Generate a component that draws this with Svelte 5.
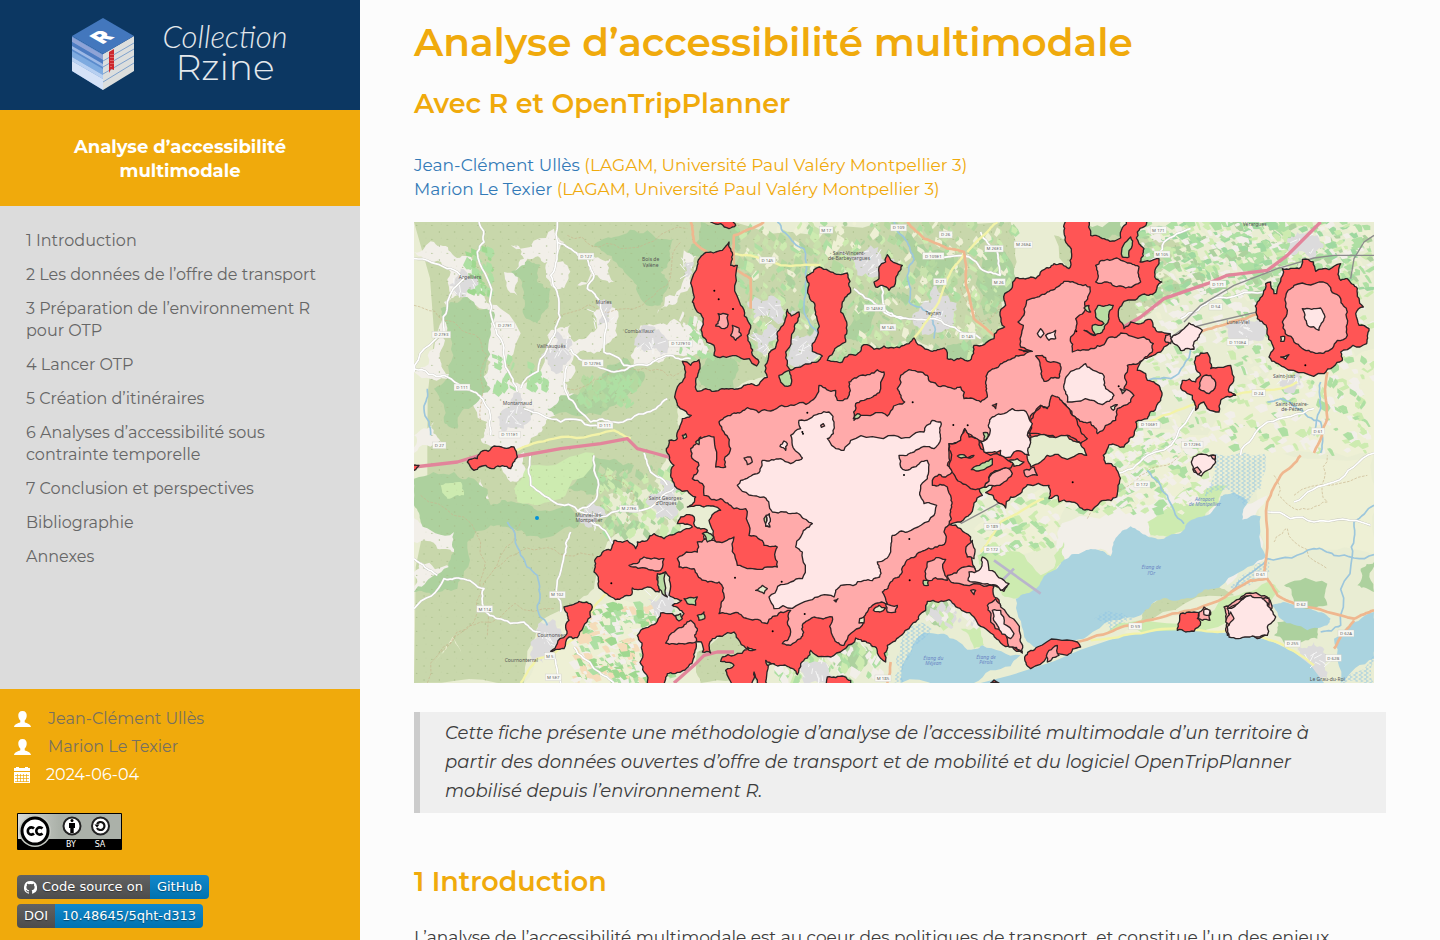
<script lang="ts">
	type Point = [number, number];

	const title = 'Analyse d’accessibilité multimodale';

	const chapters = [
		'1 Introduction',
		'2 Les données de l’offre de transport',
		'3 Préparation de l’environnement R pour OTP',
		'4 Lancer OTP',
		'5 Création d’itinéraires',
		'6 Analyses d’accessibilité sous contrainte temporelle',
		'7 Conclusion et perspectives',
		'Bibliographie',
		'Annexes'
	];

	const authors = ['Jean-Clément Ullès', 'Marion Le Texier'];
	const affiliation = '(LAGAM, Université Paul Valéry Montpellier 3)';

	// Small deterministic generator so the map stays the same on every load
	let seed = 7;
	function random() {
		seed = (seed * 16807) % 2147483647;
		return seed / 2147483647;
	}

	// Splits every edge into short steps and shifts them a little, for natural outlines
	function rough(points: string, amount: number, closed = true) {
		let line = points.split(' ').map((pair) => pair.split(',').map(Number));
		if (closed) line.push(line[0]);
		for (let pass = 0; pass < 3; pass++) {
			const next = [line[0]];
			for (let i = 1; i < line.length; i++) {
				const [ax, ay] = line[i - 1];
				const [bx, by] = line[i];
				const length = Math.hypot(bx - ax, by - ay);
				if (length > 10) {
					const shift = (random() - 0.5) * length * amount;
					next.push([(ax + bx) / 2 - ((by - ay) / length) * shift, (ay + by) / 2 + ((bx - ax) / length) * shift]);
				}
				next.push([bx, by]);
			}
			line = next;
		}
		return line.map(([x, y]) => `${Math.round(x)},${Math.round(y)}`).join(' ');
	}

	const roughAll = (shapes: string[], amount: number, closed = true) =>
		shapes.map((points) => rough(points, amount, closed));

	// Land cover, in map units (2880 x 1383)
	const scrub = roughAll([
		'0,0 960,0 1400,0 1790,0 1800,160 1760,230 1770,330 1690,370 1680,415 1600,410 1500,350 1240,440 1060,460 960,500 860,500 790,560 800,650 740,740 700,800 560,830 640,920 580,960 540,1100 500,1130 380,1200 330,1383 0,1383',
		'860,1383 850,1290 960,1230 1000,1280 1060,1383',
		'1920,40 2030,40 2180,30 2320,60 2240,150 2300,190 2180,300 2110,320 2000,300',
		'2200,1150 2260,1110 2400,1090 2460,1120 2180,1200'
	], 0.2);

	const forests = roughAll([
		'540,75 600,45 700,25 780,50 770,110 740,150 760,200 740,250 680,230 640,160 570,90',
		'290,150 340,115 380,130 370,180 410,200 400,260 370,305 330,280 330,210',
		'110,240 160,225 240,270 230,340 210,450 230,500 150,560 130,620 90,600 60,500 100,470 100,330 80,260',
		'0,770 120,750 180,770 230,850 300,840 360,860 450,850 560,880 480,920 380,950 300,920 230,910 160,960 130,1100 60,1120 0,1110 60,1060 120,990 120,930 20,900 0,850',
		'460,800 500,740 600,710 660,730 620,800 540,820',
		'400,560 440,520 540,500 580,430 640,410 690,450 640,520 560,580 420,580',
		'850,470 890,405 960,410 960,500 880,500',
		'820,90 860,0 960,0 980,60 900,90 860,110',
		'1500,60 1600,90 1640,140 1570,200 1530,160 1490,100',
		'1290,330 1330,220 1380,250 1370,320 1330,360',
		'1700,90 1760,60 1800,140 1760,240 1710,280',
		'1600,370 1670,350 1680,415 1600,410',
		'2010,0 2120,0 2130,40 2060,50 2020,40',
		'2590,1200 2640,1170 2720,1200 2710,1250 2640,1270 2580,1240',
		'1540,1140 1600,1130 1620,1190 1560,1210',
		'1250,1290 1330,1260 1380,1300 1340,1350 1260,1330',
		'2610,1090 2740,1085 2740,1150 2640,1140',
		'2840,1040 2880,1020 2880,1110 2830,1090'
	], 0.4);

	const openLand = roughAll([
		'0,90 60,60 110,90 170,100 200,170 260,260 290,480 340,480 400,340 430,320 470,310 480,360 540,330 580,240 610,340 560,390 480,400 450,480 480,560 400,590 370,640 240,690 200,650 220,600 190,500 230,420 240,270 140,210 90,240 100,320 80,420 110,460 0,450 60,380 100,240 110,150 40,120',
		'290,70 420,20 450,60 430,120 460,130 440,200 410,190 400,120 340,110 310,220 270,150 330,110',
		'490,190 530,100 590,110 600,180 550,160',
		'650,400 680,310 780,290 860,330 870,410 770,400 720,420 660,430',
		'730,275 800,200 810,80 850,100 830,180 790,240',
		'0,870 50,920 130,930 120,990 70,980 0,960',
		'190,790 200,770 225,830 180,870 155,850',
		'20,1020 110,1035 90,1060 0,1110 0,1050',
		'0,640 60,600 80,660 0,693',
		'230,700 330,690 330,760 290,780',
		'2380,890 2560,820 2560,1010 2440,1090 2420,1050',
		'1930,930 2110,820 2390,780 2400,860 2240,930 2100,1000 1990,1000 1920,1000'
	], 0.5);

	const farmland = roughAll([
		'120,1250 60,1330 70,1310 115,1245 145,1300',
		'1980,640 2380,640 2600,420 2880,380 2880,693 2560,700 2400,800 2060,920 1900,830',
		'2560,693 2880,693 2880,1000 2700,980 2560,1010',
		'1680,920 1770,860 1880,800 1960,850 1920,960 1820,1000 1740,990',
		'600,1130 780,1190 760,1383 330,1383 400,1230 520,1160',
		'2330,1260 2130,1230 2450,1190 2460,1220'
	], 0.2);

	const meadows = roughAll([
		'300,800 350,730 540,693 530,740 440,830 310,840',
		'80,790 140,780 150,820 100,830',
		'1690,1000 1760,970 1880,1060 1940,1000 1930,1030 1860,1110 1800,1130 1740,1090',
		'2200,900 2330,780 2440,790 2370,890 2260,945 2210,940',
		'2150,1200 2420,1130 2560,1080 2600,1110 2540,1170 2440,1200 2200,1235 2080,1230',
		'1920,1000 1950,960 1950,1020 1920,1045',
		'1640,1220 1700,1215 1710,1270 1680,1280'
	], 0.3);

	const towns = [
		'105,190 140,140 190,170 180,200 130,220',
		'380,400 420,330 470,350 460,420 420,450',
		'260,570 310,510 360,560 330,620 270,630',
		'550,250 585,240 585,300 550,310',
		'660,370 700,310 750,340 740,400 690,390',
		'1110,420 1150,340 1220,320 1225,400 1170,440',
		'1010,340 1060,310 1090,350 1050,400 1020,390',
		'1000,240 1090,230 1150,270 1110,300 1020,290',
		'1270,90 1370,70 1440,110 1420,150 1330,160',
		'1520,250 1560,190 1600,220 1620,280 1560,330 1500,310',
		'700,830 740,770 800,800 790,880 730,890',
		'490,880 520,850 580,880 540,915',
		'700,1130 760,1110 780,1160 720,1180',
		'350,1260 380,1200 440,1220 400,1300 360,1320',
		'2620,60 2650,30 2710,40 2700,110 2640,100',
		'2430,310 2500,290 2560,330 2470,350',
		'2600,470 2650,450 2660,490 2610,510',
		'2650,1280 2700,1260 2740,1300 2740,1370 2700,1350',
		'1150,1330 1210,1320 1260,1383 1170,1383',
		'810,130 840,120 840,160 815,165'
	];
	const townShapes = roughAll(towns, 0.7);

	const water = roughAll([
		'1805,1130 1850,1110 1880,1080 1920,1045 1950,1013 2000,993 2050,983 2090,1003 2105,948 2150,913 2200,943 2250,950 2300,933 2320,903 2380,880 2420,823 2460,812 2500,833 2485,893 2540,883 2555,1003 2530,1018 2420,1093 2370,1103 2320,1128 2250,1128 2210,1153 2180,1180 2020,1243 1920,1258 1860,1275 1830,1240',
		'1460,1383 1480,1300 1520,1238 1590,1235 1660,1283 1705,1270 1820,1300 1790,1333 1680,1383',
		'2570,1150 2610,1140 2690,1160 2750,1190 2740,1210 2680,1225 2600,1190',
		'2780,1383 2760,1250 2790,1230 2880,1170 2880,1310'
	], 0.25);
	const sea = '1700,1383 1790,1360 1920,1318 2000,1283 2120,1243 2220,1228 2330,1224 2430,1233 2500,1240 2570,1256 2640,1290 2690,1330 2730,1383';

	const marshes = roughAll([
		'2370,830 2400,693 2550,693 2540,800 2490,850 2440,800',
		'1450,1300 1470,1240 1520,1200 1560,1220 1500,1270 1470,1383 1440,1383',
		'2780,1383 2880,1300 2880,1383',
		'2450,1090 2560,1010 2560,1060 2450,1110',
		'2040,1190 2100,1170 2160,1190 2090,1225'
	], 0.3);

	const streams = roughAll([
		'1090,0 1130,50 1170,80 1175,200 1170,260 1220,340',
		'1440,0 1480,60 1500,110 1480,160 1485,240 1550,280 1560,350',
		'280,900 320,1000 370,1060 370,1150 400,1210',
		'2560,540 2600,530 2650,560 2720,600 2720,693',
		'2720,480 2720,560 2700,640',
		'2880,850 2820,900 2815,1000 2780,1210 2720,1230',
		'2200,745 2260,820 2310,905',
		'2190,480 2270,470 2330,380 2360,330',
		'2450,1110 2560,1010 2700,980 2760,1000 2880,998',
		'40,500 30,560 50,640'
	], 0.25, false);

	const motorways = [
		'2720,0 2660,60 2620,100 2560,145 2440,160 2380,185 2250,230 2180,285 2120,320',
		'0,735 130,720 230,690 300,705 440,680 560,665 640,650 670,680 720,693 780,710',
		'960,1290 910,1290 870,1300 840,1330 780,1383'
	];

	const trunks = roughAll([
		'960,130 960,40 1050,0',
		'960,140 1010,170 1010,260',
		'1480,0 1530,50 1600,80 1650,90 1655,180 1680,290 1750,350',
		'830,0 840,60 880,90',
		'2360,330 2450,300 2540,275',
		'1990,1260 2110,1220 2200,1195 2350,1160 2510,1075 2560,1070 2590,1120 2660,1150 2820,1190 2880,1165',
		'2550,1060 2560,840 2600,760 2660,700',
		'2700,693 2740,590 2740,450',
		'2760,1280 2790,1230 2820,1195',
		'1430,1320 1420,1383'
	], 0.1, false);

	const secondary = roughAll([
		'300,690 420,650 600,625 650,650',
		'960,95 1010,100 1100,130 1220,130',
		'1660,90 1720,30 1750,0',
		'1650,95 1600,170 1550,280 1500,350',
		'320,1383 370,1310 420,1295 480,1250 490,1210 570,1120 600,1090',
		'1980,680 2060,640 2160,610 2330,550 2450,520 2600,500 2650,480',
		'1700,990 1760,900 1890,830',
		'2030,1255 2160,1235 2330,1220 2460,1225 2600,1265 2700,1330'
	], 0.1, false);

	const roads = roughAll([
		'195,0 210,60 190,90 230,220 260,350 290,460 310,510',
		'0,110 100,140 150,170 100,240 90,330 0,450',
		'430,0 430,60 470,80 520,110 540,160 520,200 560,240 570,390 630,430 700,430 770,400 830,410',
		'430,60 410,160 435,240 425,330 400,380 320,500',
		'470,380 520,420 600,450 660,430',
		'460,430 465,530 530,600 600,600 700,570 760,530',
		'0,440 90,460 180,510 210,540 230,640',
		'330,560 440,600 560,615',
		'0,1160 90,1070 140,1070 210,1100 210,1160 250,1190 330,1200 380,1230',
		'350,693 350,790 420,840 500,870 560,885 700,860 780,800',
		'540,700 550,820 490,870',
		'470,930 450,1000 430,1120 440,1170',
		'530,900 600,970',
		'690,693 710,750 760,790',
		'1320,200 1390,250 1460,290 1560,290 1640,330 1700,350',
		'1400,190 1420,270 1470,290',
		'1530,100 1650,100 1700,140 1760,160',
		'1700,30 1750,90 1760,160',
		'2200,130 2250,60 2330,20',
		'2300,290 2400,230 2550,210',
		'2480,700 2560,600 2700,560',
		'2640,840 2760,780 2880,693',
		'0,1010 70,1060',
		'2100,760 2200,700 2340,560',
		'2560,870 2700,900 2870,910',
		'480,1275 540,1340 600,1383',
		'420,1295 440,1383'
	], 0.25, false);

	const paths = roughAll([
		'0,250 120,300 220,400 200,600',
		'460,40 620,80 820,20',
		'420,300 640,260 740,200 800,60',
		'460,500 620,440 760,460 820,430',
		'20,820 200,960 180,1200 40,1383',
		'240,1040 380,980 540,1000',
		'220,1240 260,1000 320,900',
		'80,1290 200,1200 420,1160',
		'560,760 660,820 640,900',
		'1640,200 1700,300 1760,240',
		'2580,760 2640,860 2740,840 2740,700',
		'2580,960 2620,920 2740,1040',
		'2640,820 2860,760',
		'2020,890 2180,760 2300,700'
	], 0.35, false);

	const railways = [
		'2140,450 2165,410 2240,370 2300,325 2400,300 2550,265',
		'2310,300 2360,250 2460,190 2590,140 2700,108 2760,100 2880,100',
		'1640,905 1780,830',
		'2810,170 2820,110 2850,60 2880,40'
	];

	// Isochrones, from the widest time band to the narrowest
	const far = roughAll([
		'805,418 830,430 855,413 858,440 845,480 850,508 875,500 900,508 950,500 990,490 1035,488 1060,466 1064,395 1092,355 1090,330 1112,300 1120,262 1132,282 1155,270 1142,320 1115,390 1120,425 1130,445 1160,435 1190,425 1225,402 1195,388 1195,365 1210,295 1202,245 1182,200 1180,160 1200,143 1222,137 1250,150 1300,153 1310,205 1285,240 1280,270 1298,335 1295,360 1262,380 1240,415 1285,420 1305,398 1325,400 1350,368 1380,382 1410,372 1440,378 1470,370 1485,365 1500,348 1520,370 1550,387 1590,378 1600,410 1640,408 1668,415 1680,370 1740,350 1750,325 1772,315 1758,280 1772,215 1805,168 1850,165 1865,170 1885,145 1920,125 1965,140 1972,90 1950,30 1960,-10 2020,-10 2030,40 2070,50 2120,48 2140,-10 2200,-10 2170,30 2175,65 2190,80 2178,120 2235,110 2222,165 2243,180 2225,210 2180,220 2130,238 2115,290 2130,320 2150,300 2210,292 2235,330 2268,335 2265,365 2240,390 2205,405 2180,420 2170,445 2195,455 2200,475 2225,485 2242,525 2225,560 2200,590 2165,600 2160,640 2130,675 2085,668 2068,700 2075,725 2105,735 2112,790 2108,825 2070,835 2035,865 1995,853 1965,838 1935,840 1930,820 1905,830 1905,790 1840,788 1810,820 1790,825 1775,858 1750,840 1715,812 1740,785 1690,795 1705,820 1680,843 1670,875 1640,900 1607,908 1640,920 1670,945 1678,980 1675,1020 1700,1080 1740,1093 1760,1150 1760,1200 1825,1293 1760,1263 1730,1233 1700,1213 1650,1168 1605,1133 1540,1138 1535,1165 1505,1200 1465,1238 1420,1270 1415,1320 1390,1293 1365,1263 1325,1248 1260,1300 1190,1285 1160,1325 1150,1358 1120,1333 1065,1320 1060,1400 1030,1383 1020,1350 1010,1400 960,1400 945,1370 935,1345 960,1330 920,1318 925,1305 960,1300 1005,1280 960,1230 925,1243 895,1250 890,1293 865,1290 862,1260 845,1260 838,1310 800,1350 760,1355 755,1400 700,1400 690,1350 685,1290 670,1240 680,1225 725,1205 740,1173 790,1190 810,1175 775,1150 803,1135 765,1120 755,1050 730,1060 735,1110 700,1095 655,1098 650,1120 605,1133 555,1098 540,1050 545,1010 590,985 600,955 640,955 665,980 670,960 720,935 750,950 800,930 835,915 790,905 800,885 835,880 842,912 880,925 870,950 905,960 885,895 920,865 870,855 820,855 845,825 790,800 770,760 780,730 757,680 765,655 790,650 805,590 832,580 790,550 785,510 805,480 815,450',
		'890,0 910,-10 955,-10 965,10 945,20 920,5',
		'945,60 925,85 870,95 850,130 835,240 860,275 865,340 900,370 900,400 975,405 1028,432 1035,420 1010,370 1010,310 980,250 970,130 950,130 950,80',
		'1380,180 1395,170 1395,135 1415,120 1420,98 1430,115 1465,130 1445,175 1425,205 1405,190 1385,195',
		'2530,290 2530,240 2555,185 2570,180 2580,215 2588,215 2605,140 2655,140 2665,112 2698,120 2705,148 2780,125 2780,175 2800,170 2830,200 2848,255 2825,275 2835,310 2865,320 2858,365 2780,390 2785,415 2730,455 2610,435 2565,405 2580,380 2560,320',
		'2345,405 2380,392 2390,440 2450,430 2460,465 2445,510 2465,520 2420,535 2415,570 2380,560 2370,540 2345,565 2335,520 2305,505 2305,475 2345,480 2360,460',
		'160,720 190,710 200,690 240,672 300,675 310,705 290,740 240,740 215,730 180,745',
		'-10,735 15,730 0,745',
		'410,1288 430,1265 455,1240 465,1195 450,1155 495,1138 535,1155 530,1185 490,1247 465,1245 450,1280',
		'1835,1300 1870,1275 1990,1260 2000,1275 1960,1300 1850,1340',
		'2290,1225 2300,1175 2325,1170 2355,1172 2360,1200 2340,1228',
		'1240,1365 1290,1363 1310,1375 1300,1400 1230,1400',
		'1730,1383 1740,1374 1755,1383'
	], 0.35);

	const middle = roughAll([
		'960,573 1000,557 1070,567 1140,550 1205,525 1215,490 1265,505 1270,535 1300,530 1305,480 1340,460 1390,443 1410,450 1400,500 1365,530 1325,545 1320,595 1350,580 1420,582 1472,540 1450,500 1460,460 1485,443 1520,450 1550,480 1600,495 1640,495 1650,530 1700,540 1720,525 1715,485 1730,445 1770,420 1820,400 1855,388 1820,375 1828,310 1812,300 1832,270 1838,235 1870,225 1910,205 1950,178 2000,188 2028,195 2012,240 2010,270 1985,290 1970,345 1975,390 2040,380 2080,350 2120,333 2190,345 2218,365 2215,390 2185,415 2140,430 2138,480 2130,500 2160,520 2150,540 2110,560 2105,595 2050,635 2030,600 1990,590 1965,560 1940,540 1915,520 1905,560 1880,550 1855,575 1850,640 1780,690 1730,660 1695,655 1652,620 1640,655 1605,665 1605,700 1600,730 1620,745 1595,765 1575,757 1555,775 1555,790 1600,795 1612,830 1610,870 1605,908 1590,930 1595,960 1570,975 1520,990 1475,1020 1465,1050 1430,1080 1405,1110 1420,1145 1375,1150 1360,1170 1345,1210 1290,1270 1255,1240 1255,1185 1200,1185 1165,1210 1160,1250 1130,1270 1105,1265 1130,1230 1120,1200 1130,1165 1100,1170 1060,1205 1000,1190 960,1173 915,1175 930,1120 915,1080 870,1075 840,1040 795,1035 790,1010 850,990 850,960 900,955 960,945 970,1030 1000,1040 1060,1035 1090,1035 1090,975 1050,970 1005,940 995,860 960,860 920,830 870,820 865,785 835,770 855,730 830,680 870,645 900,645 905,735 935,735 950,680 930,630 915,600',
		'645,1030 690,1005 750,1010 740,1045 700,1040',
		'755,1263 790,1220 830,1195 850,1220 845,1260 800,1265',
		'912,275 942,278 940,315 905,312',
		'955,310 975,318 982,340 965,355 950,340',
		'2045,180 2045,130 2080,112 2135,120 2175,135 2180,180 2120,192 2080,180',
		'2615,225 2640,190 2740,185 2780,230 2800,270 2800,340 2770,355 2730,393 2690,390 2640,360 2605,300 2620,265',
		'2355,500 2365,465 2390,460 2405,490 2385,515',
		'2255,340 2268,335 2270,365 2255,360',
		'1540,1020 1595,1012 1600,1075 1590,1073 1540,1075',
		'1600,1060 1650,1035 1680,1035 1685,1070 1740,1080 1780,1090 1770,1108 1740,1090 1620,1083',
		'1720,1150 1745,1130 1760,1155 1820,1240 1825,1290 1785,1275 1730,1200',
		'1710,795 1730,760 1780,735 1795,755 1770,780',
		'2350,1190 2370,1155 2390,1170 2388,1195 2365,1195',
		'2430,1155 2490,1120 2560,1125 2570,1170 2560,1240 2530,1250 2440,1240 2440,1200',
		'1905,1285 1930,1270 1935,1300 1900,1320',
		'1655,985 1675,955 1680,1010 1660,1005',
		'1415,1145 1450,1150 1445,1170 1420,1170',
		'1670,1105 1685,1105 1680,1118',
		'1830,745 1860,735 1870,760 1840,765'
	], 0.35);

	// Pockets of the widest band inside the middle one
	const farPockets = roughAll([
		'1605,665 1640,655 1652,620 1665,645 1695,655 1700,680 1730,700 1800,720 1790,738 1730,755 1710,795 1670,800 1640,780 1605,730',
		'1865,402 1885,400 1900,418 1938,425 1935,468 1890,478 1878,430',
		'1846,635 1850,600 1880,550 1900,560 1915,520 1950,545 1990,600 2020,650 2000,665 1960,640 1900,640',
		'1735,550 1748,545 1745,560',
		'1815,383 1850,386 1830,389',
		'1260,1135 1272,1130 1266,1140'
	], 0.3);

	const gaps = roughAll([
		'2010,325 2045,340 2035,310 2070,305 2045,285 2052,250 2098,250 2085,290 2065,330 2040,341',
		'2125,105 2128,70 2150,45 2155,70 2145,105',
		'1095,460 1125,445 1130,490 1112,492 1100,480',
		'810,1130 850,1125 845,1150 820,1145',
		'850,1180 870,1170 872,1190 855,1195',
		'730,1055 755,1050 760,1125 735,1100',
		'865,935 880,930 900,945 880,960',
		'1528,1075 1543,1075 1543,1090 1530,1090',
		'1318,590 1330,575 1340,580 1330,590',
		'805,640 815,635 818,645 808,650',
		'845,660 860,645 855,668',
		'1708,632 1720,632 1722,645 1710,655',
		'1050,890 1060,880 1065,915 1055,912',
		'1055,1315 1080,1325 1060,1330',
		'1000,1275 1025,1283 1005,1285',
		'1672,743 1712,722 1735,710 1735,728 1700,745',
		'1630,702 1680,700 1670,708',
		'785,1180 800,1175 805,1190 795,1197',
		'2010,258 2025,250 2030,270'
	], 0.3);

	const paleGaps = roughAll([
		'1378,1165 1395,1150 1415,1158 1398,1170',
		'1337,1190 1350,1185 1350,1203 1335,1203',
		'2600,345 2612,343 2610,358 2600,358',
		'2600,405 2625,398 2615,412',
		'2090,555 2110,548 2098,565',
		'2118,500 2135,505 2125,515',
		'1850,645 1890,637 1960,640 2000,665 2018,700 1960,712 1900,700 1880,720 1850,735 1840,710',
		'1785,715 1810,710 1830,720 1800,733',
		'1025,1105 1045,1090 1060,1100 1050,1115'
	], 0.3);

	const near = roughAll([
		'1215,575 1245,570 1260,600 1258,635 1240,650 1260,675 1290,685 1310,655 1440,640 1530,630 1555,595 1580,600 1580,650 1560,680 1530,673 1500,690 1455,700 1460,735 1475,745 1500,735 1540,715 1540,770 1520,800 1530,845 1568,850 1560,880 1480,930 1435,940 1430,990 1390,1020 1397,1065 1350,1075 1280,1090 1260,1125 1185,1135 1080,1160 1065,1125 1130,1080 1165,1070 1165,990 1145,975 1160,945 1195,905 1160,880 1110,870 1075,870 1050,825 970,790 980,775 1030,755 1045,715 1100,710 1130,725 1165,708 1135,670 1130,640 1160,620 1155,595',
		'1725,605 1735,585 1760,577 1795,560 1830,565 1845,590 1855,605 1840,640 1850,660 1845,700 1800,690 1790,705 1760,700 1760,685 1710,690 1700,660 1722,645',
		'1950,500 1965,455 1995,440 2015,425 2030,440 2065,455 2075,500 2100,520 2065,548 1960,540',
		'2665,260 2720,258 2733,285 2715,325 2680,310',
		'2270,350 2310,320 2325,303 2350,315 2365,325 2355,345 2340,360 2340,382 2300,385 2290,370',
		'1870,335 1880,320 1890,335 1880,347',
		'1895,340 1925,325 1925,350 1905,355',
		'1662,1075 1665,1050 1695,1045 1705,1005 1715,1010 1725,1045 1785,1085 1760,1105 1720,1085',
		'1735,1165 1760,1165 1800,1235 1790,1250 1750,1210',
		'2440,1160 2480,1135 2510,1120 2560,1130 2560,1150 2585,1185 2560,1215 2560,1240 2500,1245 2445,1245 2440,1215 2455,1185',
		'2332,720 2338,705 2370,697 2398,700 2405,720 2390,740 2362,762 2340,750',
		'2370,1162 2388,1165 2385,1180 2370,1178',
		'1098,673 1110,657 1120,665 1115,685',
		'1056,880 1066,875 1064,905 1068,915 1055,912'
	], 0.3);

	const nearSpots = roughAll([
		'2338,742 2350,735 2362,750 2352,758',
		'2390,700 2404,700 2404,712 2396,710',
		'2435,1200 2450,1170 2460,1190 2445,1210',
		'2545,1130 2565,1128 2565,1150',
		'1220,610 1228,605 1232,612 1222,616',
		'990,708 1010,705 1015,720 1000,728',
		'2445,1150 2485,1128 2500,1122 2460,1150 2440,1160'
	], 0.2);

	const dots: Point[] = [
		[901, 206], [914, 232], [957, 261], [592, 1084], [1180, 572], [1496, 541], [1618, 609],
		[1661, 610], [1487, 1075], [1987, 328], [2674, 430], [2114, 493], [1470, 759], [1486, 951],
		[1103, 1079], [1076, 1228], [1167, 635], [1976, 781], [1172, 1176], [963, 1067], [1165, 630]
	];

	const places = [
		{ x: 168, y: 170, name: 'Argelliers' },
		{ x: 412, y: 379, name: 'Vailhauquès' },
		{ x: 310, y: 549, name: 'Montarnaud' },
		{ x: 569, y: 245, name: 'Murles' },
		{ x: 675, y: 334, name: 'Combaillaux' },
		{ x: 710, y: 118, name: 'Bois de' },
		{ x: 710, y: 134, name: 'Valène' },
		{ x: 1305, y: 98, name: 'Saint-Vincent-' },
		{ x: 1305, y: 113, name: 'de-Barbeyrargues' },
		{ x: 1558, y: 280, name: 'Teyran' },
		{ x: 2522, y: 12, name: 'Vérargues' },
		{ x: 2472, y: 306, name: 'Lunel-Viel' },
		{ x: 2610, y: 468, name: 'Saint-Just' },
		{ x: 2634, y: 553, name: 'Saint-Nazaire-' },
		{ x: 2634, y: 568, name: 'de-Pézan' },
		{ x: 525, y: 884, name: 'Murviel-lès-' },
		{ x: 525, y: 899, name: 'Montpellier' },
		{ x: 756, y: 833, name: 'Saint Georges-' },
		{ x: 756, y: 848, name: 'd’Orques' },
		{ x: 412, y: 1246, name: 'Cournonsec' },
		{ x: 322, y: 1320, name: 'Cournonterral' },
		{ x: 2740, y: 1378, name: 'Le Grau-du-Roi' }
	];

	const waterNames = [
		{ x: 2212, y: 1042, name: 'Étang de' },
		{ x: 2212, y: 1058, name: 'l’Or' },
		{ x: 1558, y: 1314, name: 'Étang du' },
		{ x: 1558, y: 1328, name: 'Méjean' },
		{ x: 1716, y: 1312, name: 'Étang de' },
		{ x: 1716, y: 1326, name: 'Pérols' },
		{ x: 2372, y: 838, name: 'Aéroport' },
		{ x: 2372, y: 853, name: 'de Montpellier' }
	];

	const shields = [
		{ x: 516, y: 103, ref: 'D 127' }, { x: 82, y: 338, ref: 'D 27E3' }, { x: 273, y: 310, ref: 'D 27E1' },
		{ x: 144, y: 496, ref: 'D 111' }, { x: 536, y: 423, ref: 'D 127E6' }, { x: 573, y: 610, ref: 'D 111' },
		{ x: 287, y: 638, ref: 'D 111E1' }, { x: 76, y: 670, ref: 'D 27' }, { x: 800, y: 365, ref: 'D 127E10' },
		{ x: 1237, y: 24, ref: 'M 17' }, { x: 1454, y: 17, ref: 'D 109' }, { x: 1595, y: 38, ref: 'D 26' },
		{ x: 1558, y: 102, ref: 'D 109E1' }, { x: 1740, y: 80, ref: 'M 26E3' }, { x: 1828, y: 68, ref: 'M 26E4' },
		{ x: 1060, y: 115, ref: 'D 145' }, { x: 1382, y: 258, ref: 'D 145E2' }, { x: 1422, y: 316, ref: 'M 145' },
		{ x: 1578, y: 179, ref: 'D 21' }, { x: 1754, y: 180, ref: 'M 26' }, { x: 1660, y: 342, ref: 'D 145' },
		{ x: 2233, y: 24, ref: 'M 171' }, { x: 2244, y: 97, ref: 'M 105' }, { x: 2412, y: 186, ref: 'D 171' },
		{ x: 2405, y: 254, ref: 'D 54' }, { x: 2471, y: 360, ref: 'D 110E4' }, { x: 2534, y: 513, ref: 'D 24' },
		{ x: 2206, y: 608, ref: 'D 106E1' }, { x: 2335, y: 668, ref: 'D 172E6' }, { x: 2184, y: 787, ref: 'D 172' },
		{ x: 645, y: 860, ref: 'M 27E6' }, { x: 430, y: 1118, ref: 'M 102' }, { x: 212, y: 1161, ref: 'M 114' },
		{ x: 407, y: 1302, ref: 'M 5' }, { x: 418, y: 1366, ref: 'M 5E7' }, { x: 1734, y: 914, ref: 'D 189' },
		{ x: 1734, y: 983, ref: 'D 172' }, { x: 2540, y: 1058, ref: 'D 61' }, { x: 2712, y: 628, ref: 'D 61' },
		{ x: 2661, y: 1148, ref: 'D 62' }, { x: 2796, y: 1234, ref: 'D 62A' }, { x: 2164, y: 1213, ref: 'D 59' },
		{ x: 2636, y: 1265, ref: 'D 255' }, { x: 2758, y: 1308, ref: 'D 62B' }, { x: 1407, y: 1369, ref: 'M 185' }
	];

	function scatter(x: number, y: number, w: number, h: number, count: number, angle: number, colors: string[]) {
		return Array.from({ length: count }, () => {
			const cx = x + random() * w;
			const cy = y + random() * h;
			const rx = 4 + random() * 14;
			const ry = 4 + random() * 12;
			const a = angle + random() * 0.5;
			const corners = [[-rx, -ry], [rx * 0.4, -ry * 0.9], [rx, -ry * 0.3], [rx * 0.8, ry], [-rx * 0.5, ry * 0.8]];
			const points = corners
				.map(([px, py]) => {
					const qx = cx + px * Math.cos(a) - py * Math.sin(a);
					const qy = cy + px * Math.sin(a) + py * Math.cos(a);
					return `${Math.round(qx)},${Math.round(qy)}`;
				})
				.join(' ');
			return { points, color: colors[Math.floor(random() * colors.length)] };
		});
	}

	const greens = ['#add19e', '#aedfa3', '#aedfa3', '#cdebb0', '#eef0d5', '#f2efe9', '#9fd8a0'];
	const fields = [
		...scatter(960, 0, 840, 420, 600, 0.4, ['#add19e', '#aedfa3', '#c8e2ac', '#cdebb0', '#eef0d5', '#b5d8a0']),
		...scatter(2180, 0, 690, 240, 700, -0.7, greens),
		...scatter(2160, 240, 720, 453, 460, -0.7, ['#eef0d5', '#f2efe9', '#f2efe9', '#f2efe9', '#cdebb0', '#aedfa3']),
		...scatter(1960, 650, 420, 220, 380, -0.9, ['#f2efe9', '#f2efe9', '#aedfa3', '#cdebb0', '#eef0d5']),
		...scatter(1700, 800, 240, 200, 90, -0.9, ['#aedfa3', '#cdebb0', '#f2efe9']),
		...scatter(480, 1150, 290, 233, 420, -0.6, ['#f2efe9', '#aedfa3', '#9fd890', '#f5dcba', '#eef0d5']),
		...scatter(560, 740, 250, 200, 160, 0.5, ['#aedfa3', '#cdebb0', '#c8d7ab', '#add19e']),
		...scatter(500, 460, 180, 90, 70, 0.5, ['#aedfa3', '#b5d8a0']),
		...scatter(160, 80, 70, 140, 40, 0.2, ['#aedfa3', '#9fd890']),
		...scatter(240, 400, 60, 120, 14, 0.2, ['#aedfa3']),
		...scatter(330, 400, 70, 100, 14, 0.2, ['#aedfa3']),
		...scatter(800, 280, 100, 130, 50, 0.2, ['#aedfa3', '#f2efe9']),
		...scatter(1080, 1270, 330, 110, 90, 0.4, ['#cdebb0', '#f2efe9', '#aedfa3']),
		...scatter(1540, 1140, 150, 70, 40, 0.4, ['#cdebb0', '#f2efe9', '#dcdbdc']),
		...scatter(2660, 400, 200, 250, 30, 0.4, ['#cdebb0', '#aedfa3'])
	];

	const streets = towns.flatMap((town) => {
		const corners = town.split(' ').map((pair) => pair.split(',').map(Number));
		const cx = corners.reduce((sum, c) => sum + c[0], 0) / corners.length;
		const cy = corners.reduce((sum, c) => sum + c[1], 0) / corners.length;
		return Array.from({ length: 9 }, () => {
			const x = Math.round(cx + (random() - 0.5) * 60);
			const y = Math.round(cy + (random() - 0.5) * 60);
			return `${x},${y} ${x + Math.round((random() - 0.5) * 50)},${y + Math.round((random() - 0.5) * 50)}`;
		});
	});
</script>

<div class="page">
	<aside class="sidebar">
		<a class="brand" href="#collection">
			<svg class="cube" viewBox="0 0 62 72" aria-hidden="true">
				<polygon points="0,18 31,36 31,72 0,53" fill="#5b8ccd" />
				<polygon points="0,19 31,37 31,42 0,24" fill="#8fa3d6" />
				<polygon points="0,26 31,44 31,49 0,31" fill="#9db9e6" />
				<polygon points="0,24 31,42 31,46 0,28" fill="#4d7cc2" />
				<polygon points="0,33 31,51 31,57 0,39" fill="#7eabe0" />
				<polygon points="0,39 31,57 31,61 0,43" fill="#b8d0f1" />
				<polygon points="0,43 31,61 31,72 0,53" fill="#d5e2f7" />
				<polygon points="31,36 62,18 62,53 31,72" fill="#dcdedd" />
				<path d="M31 43L62 25M31 49L62 31M31 56L62 38M31 64L62 45" stroke="#7ea2cd" fill="none" />
				<polygon points="31,0 62,18 31,36 0,18" fill="#4377bd" />
				<polygon points="37,34 42,31 42,52 39,51 37,55" fill="#cc282d" />
				<path d="M39 36v14M41 36v12" stroke="#ee999b" stroke-dasharray="1 2" />
				<text class="cube-letter" transform="matrix(0.87 -0.5 0.87 0.5 38 22)" x="-9" y="0">R</text>
			</svg>
			<span class="brand-name">
				<span class="brand-collection">Collection</span>
				<span class="brand-rzine">Rzine</span>
			</span>
		</a>

		<div class="doc-title">{title}</div>

		<nav class="toc">
			{#each chapters as chapter, i}
				<a href="#chapitre-{i + 1}">{chapter}</a>
			{/each}
		</nav>

		<div class="meta">
			<ul class="credits">
				{#each authors as author}
					<li>
						<svg viewBox="0 0 17 16" aria-hidden="true">
							<path d="M8.500 0C5.500 0 4 2 4.300 5c.2 2 1 3.500 2 4.500v1.700C4 12.300.3 13 0 16h17c-.3-3-4-3.700-6.300-4.800V9.500c1-1 1.800-2.500 2-4.500C13 2 11.500 0 8.500 0z" />
						</svg>
						<a href="#auteurs">{author}</a>
					</li>
				{/each}
				<li class="date">
					<svg viewBox="0 0 17 16" aria-hidden="true">
						<path d="M0 1h2V0h3v1h6V0h3v1h2v3H0zM0 5h16v11H0z" />
						<path class="grid" d="M1 8.500h14M1 11.500h14M1 14.500h14M3.500 7v8M6.500 7v8M9.500 7v8M12.500 7v8" />
					</svg>
					<span>2024-06-04</span>
				</li>
			</ul>

			<a class="licence" href="#licence" aria-label="Licence CC BY-SA">
				<svg viewBox="0 0 105 37" width="105" height="37">
					<defs>
						<linearGradient id="cc-shade">
							<stop offset="0" stop-color="#d8dad5" />
							<stop offset="0.4" stop-color="#abb1a9" />
						</linearGradient>
					</defs>
					<rect width="105" height="37" rx="1" />
					<rect x="1" y="1" width="103" height="25" fill="url(#cc-shade)" />
					<circle cx="18" cy="18" r="16" fill="#c5c9c2" />
					<circle cx="18" cy="18" r="13" fill="#fff" stroke="#000" stroke-width="3" />
					<path d="M17 15.500a3.600 3.600 0 1 0 0 5M25.500 15.500a3.600 3.600 0 1 0 0 5" fill="none" stroke="#000" stroke-width="2.600" />
					<circle cx="55" cy="13" r="8.500" fill="#fff" stroke="#222" stroke-width="2" />
					<circle cx="55" cy="7.500" r="1.500" />
					<path d="M52 10h6v5h-1.300v5h-3.400v-5H52z" />
					<circle cx="83.500" cy="13" r="8.500" fill="#fff" stroke="#222" stroke-width="2" />
					<path d="M80 11a4 4 0 1 1 0 4" fill="none" stroke="#111" stroke-width="2.200" />
					<path d="M77.500 11.500h5l-2.500 3z" />
					<text x="54" y="34" text-anchor="middle">BY</text>
					<text x="83" y="34" text-anchor="middle">SA</text>
				</svg>
			</a>

			<a class="badge" href="#github">
				<span class="badge-label">
					<svg viewBox="0 0 16 16" width="13" height="13" aria-hidden="true">
						<path fill="#fff" d="M8 0a8 8 0 0 0-2.500 15.600c.4.1.5-.2.5-.4v-1.500c-2.200.5-2.700-.9-2.700-.9-.4-.9-.9-1.200-.9-1.200-.7-.5.1-.5.1-.5.8.1 1.200.8 1.200.8.7 1.200 1.900.9 2.300.7.1-.5.3-.9.5-1.100-1.800-.2-3.600-.9-3.600-4 0-.9.3-1.600.8-2.100-.1-.2-.4-1 .1-2.100 0 0 .7-.2 2.200.8a7.500 7.500 0 0 1 4 0c1.500-1 2.200-.8 2.200-.8.4 1.100.2 1.900.1 2.100.5.6.8 1.300.8 2.100 0 3.100-1.900 3.800-3.700 4 .3.300.6.8.6 1.500v2.200c0 .2.100.5.6.4A8 8 0 0 0 8 0z" />
					</svg>
					Code source on
				</span>
				<span class="badge-value">GitHub</span>
			</a>
			<a class="badge" href="#doi">
				<span class="badge-label">DOI</span>
				<span class="badge-value">10.48645/5qht-d313</span>
			</a>
		</div>
	</aside>

	<main>
		<h1>{title}</h1>
		<h2 class="subtitle">Avec R et OpenTripPlanner</h2>

		<p class="authors">
			{#each authors as author}
				<span><a href="#auteurs">{author}</a> {affiliation}</span>
			{/each}
		</p>

		<svg class="map" viewBox="0 0 2880 1383" role="img" aria-label="Carte des isochrones autour de Montpellier">
			<defs>
				<pattern id="trees" width="46" height="42" patternUnits="userSpaceOnUse">
					<circle cx="8" cy="10" r="2" />
					<circle cx="30" cy="30" r="2" />
					<circle cx="36" cy="6" r="1" />
				</pattern>
				<pattern id="reeds" width="16" height="12" patternUnits="userSpaceOnUse">
					<path d="M2 3h8M8 9h7" />
				</pattern>
			</defs>

			<rect width="2880" height="1383" fill="#e9edd3" />

			{#each scrub as points}<polygon {points} fill="#c8d7ab" />{/each}
			{#each farmland as points}<polygon {points} fill="#eef0d5" />{/each}
			{#each openLand as points}<polygon {points} fill="#f2efe9" />{/each}
			{#each forests as points}<polygon {points} fill="#add19e" />{/each}
			{#each meadows as points}<polygon {points} fill="#cdebb0" />{/each}
			{#each fields as field}<polygon points={field.points} fill={field.color} />{/each}
			{#each townShapes as points}<polygon {points} fill="#dcdbdc" />{/each}
			{#each scrub as points}<polygon {points} fill="url(#trees)" />{/each}
			{#each water as points}<polygon {points} fill="#aad3df" />{/each}
			<polygon points={sea} fill="#aad3df" />
			{#each marshes as points}<polygon {points} fill="url(#reeds)" />{/each}

			<g class="lines">
				{#each paths as points}<polyline {points} class="path" />{/each}
				{#each streams as points}<polyline {points} class="stream" />{/each}
				{#each streets as points}<polyline {points} class="street" />{/each}
				{#each roads as points}<polyline {points} class="road-case" />{/each}
				{#each roads as points}<polyline {points} class="road" />{/each}
				{#each secondary as points}<polyline {points} class="secondary" />{/each}
				{#each trunks as points}<polyline {points} class="trunk" />{/each}
				{#each motorways as points}<polyline {points} class="motorway" />{/each}
				{#each railways as points}<polyline {points} class="railway" />{/each}
				<path class="runway" d="M1740 1015L1880 1115M1760 1080L1800 1040" />
			</g>

			{#each places as place}<text class="place" x={place.x} y={place.y}>{place.name}</text>{/each}
			{#each waterNames as place}<text class="place water-name" x={place.x} y={place.y}>{place.name}</text>{/each}
			{#each shields as shield}
				<rect class="shield" x={shield.x - 4 * shield.ref.length - 4} y={shield.y - 10} width={8 * shield.ref.length + 8} height="20" />
				<text class="ref" x={shield.x} y={shield.y + 5}>{shield.ref}</text>
			{/each}
			<circle cx="369" cy="888" r="6" fill="#0092da" />

			<g class="iso">
				{#each far as points}<polygon {points} fill="#ff5555" />{/each}
				{#each middle as points}<polygon {points} fill="#ffaaaa" />{/each}
				{#each farPockets as points}<polygon {points} fill="#ff5555" />{/each}
				{#each gaps as points}<polygon {points} fill="#b9dda3" />{/each}
				{#each paleGaps as points}<polygon {points} fill="#e6ecce" />{/each}
				{#each near as points}<polygon {points} fill="#ffe6e6" />{/each}
				{#each nearSpots as points}<polygon {points} fill="#ffaaaa" />{/each}
				{#each dots as [cx, cy]}<circle {cx} {cy} r="3" />{/each}
			</g>
		</svg>

		<blockquote>
			Cette fiche présente une méthodologie d’analyse de l’accessibilité multimodale d’un territoire à
			partir des données ouvertes d’offre de transport et de mobilité et du logiciel OpenTripPlanner
			mobilisé depuis l’environnement R.
		</blockquote>

		<h2 id="chapitre-1">1 Introduction</h2>
		<p class="text">
			L’analyse de l’accessibilité multimodale est au coeur des politiques de transport, et constitue l’un des enjeux
		</p>
	</main>
</div>

<style>
	:global(body) {
		background: #fcfcfc;
	}

	.page {
		display: flex;
		height: 100vh;
		font-family: Montserrat, Inter, sans-serif;
		font-size: 16px;
		color: #3c3c3c;
	}

	a {
		color: inherit;
		text-decoration: none;
	}

	.sidebar {
		flex: 0 0 25%;
		display: flex;
		flex-direction: column;
		min-width: 0;
		background: #dcdcdc;
	}

	.brand {
		display: flex;
		justify-content: center;
		align-items: center;
		gap: 28px;
		height: 108px;
		padding-bottom: 2px;
		background: #0c3762;
		color: #e4e8ec;
	}

	.cube {
		width: 62px;
		height: 72px;
	}

	.cube-letter {
		font: 900 22px Inter, sans-serif;
		fill: #fff;
	}

	.brand-name {
		display: flex;
		flex-direction: column;
		align-items: center;
		padding-bottom: 8px;
	}

	.brand-collection {
		font: italic 300 31px/34px Lato, cursive;
	}

	.brand-rzine {
		font-size: 36px;
		line-height: 28px;
		font-weight: 300;
	}

	.doc-title {
		padding: 25px 60px 23px;
		background: #f0aa0c;
		color: #fff;
		font-size: 18px;
		line-height: 24px;
		font-weight: 700;
		text-align: center;
	}

	.toc {
		flex: 1;
		display: flex;
		flex-direction: column;
		gap: 12px;
		padding: 24px 24px 24px 26px;
		overflow: hidden;
		color: #666;
		line-height: 22px;
	}

	.meta {
		display: flex;
		flex-direction: column;
		align-items: flex-start;
		padding: 16px 14px 12px;
		background: #f0aa0c;
	}

	.credits {
		margin: 0 0 24px;
		padding: 0;
		list-style: none;
	}

	.credits li {
		display: flex;
		align-items: center;
		gap: 17px;
		line-height: 28px;
		color: #777060;
	}

	.credits svg {
		width: 17px;
		height: 16px;
		fill: #fff;
	}

	.credits .date {
		gap: 15px;
		color: #fff;
	}

	.grid {
		fill: none;
		stroke: #f0aa0c;
		stroke-width: 0.7;
	}

	.licence {
		margin: 0 3px 25px;
		line-height: 0;
	}

	.licence text {
		font: 8px "DejaVu Sans", sans-serif;
		fill: #fff;
	}

	.badge {
		display: flex;
		margin: 0 3px 5px;
		border-radius: 4px;
		overflow: hidden;
		font: 13px/24px "DejaVu Sans", sans-serif;
		color: #fff;
		text-shadow: 0 1px 1px #0006;
	}

	.badge:last-child {
		margin-bottom: 0;
	}

	.badge-label {
		display: flex;
		align-items: center;
		gap: 5px;
		padding: 0 7px;
		background: linear-gradient(#626262, #4c4c4c);
	}

	.badge-value {
		padding: 0 7px;
		background: linear-gradient(#1288cc, #0072b0);
	}

	main {
		flex: 1;
		min-width: 0;
		padding: 0 54px;
		overflow-y: auto;
		scrollbar-width: none;
	}

	h1,
	h2 {
		margin: 0;
		color: #f0aa0c;
		font-weight: 600;
	}

	h1 {
		padding-top: 18px;
		font-size: 39px;
		line-height: 48px;
	}

	h2 {
		font-size: 27px;
		line-height: 32px;
	}

	.subtitle {
		margin-top: 22px;
	}

	.authors {
		display: flex;
		flex-direction: column;
		margin: 33px 0 21px;
		color: #f0aa0c;
		font-size: 17px;
		line-height: 24px;
	}

	.authors a {
		color: #337ab7;
	}

	.map {
		display: block;
		width: 100%;
		max-width: 960px;
		overflow: hidden;
	}

	.lines polyline,
	.lines path {
		fill: none;
		stroke-linejoin: round;
	}

	.path {
		stroke: #c9b58e;
		stroke-width: 2;
		stroke-dasharray: 8 4;
	}

	.stream {
		stroke: #9cc6dc;
		stroke-width: 5;
	}

	.street {
		stroke: #f6f6f6;
		stroke-width: 3;
	}

	.road-case {
		stroke: #c4c4bc;
		stroke-width: 7;
	}

	.road {
		stroke: #fff;
		stroke-width: 5;
	}

	.secondary {
		stroke: #f3f3a8;
		stroke-width: 7;
	}

	.trunk {
		stroke: #efb78f;
		stroke-width: 8;
	}

	.motorway {
		stroke: #e2859b;
		stroke-width: 10;
	}

	.railway {
		stroke: #8c8c8c;
		stroke-width: 4;
	}

	.runway {
		stroke: #b9b5cc;
		stroke-width: 8;
	}

	#trees circle {
		fill: #a6bb87;
	}

	#reeds path {
		stroke: #8ec4e4;
		stroke-width: 3;
	}

	.place {
		fill: #555;
		font-family: "Noto Sans", sans-serif;
		font-size: 15px;
		text-anchor: middle;
	}

	.water-name {
		fill: #6a86c4;
		font-style: italic;
	}

	.shield {
		fill: #f8f8f4;
		stroke: #c8c8c0;
	}

	.ref {
		fill: #666;
		font-family: "Noto Sans", sans-serif;
		font-size: 13px;
		text-anchor: middle;
	}

	.iso polygon {
		stroke: #2d2426;
		stroke-width: 4;
		stroke-linejoin: round;
	}

	blockquote {
		margin: 29px 0 53px;
		padding: 7px 50px 7px 25px;
		border-left: 6px solid #ccc;
		background: #efefef;
		font-size: 18px;
		line-height: 29px;
		font-style: italic;
	}

	.text {
		margin: 27px 0 0;
		font-size: 17px;
		line-height: 24px;
	}
</style>
